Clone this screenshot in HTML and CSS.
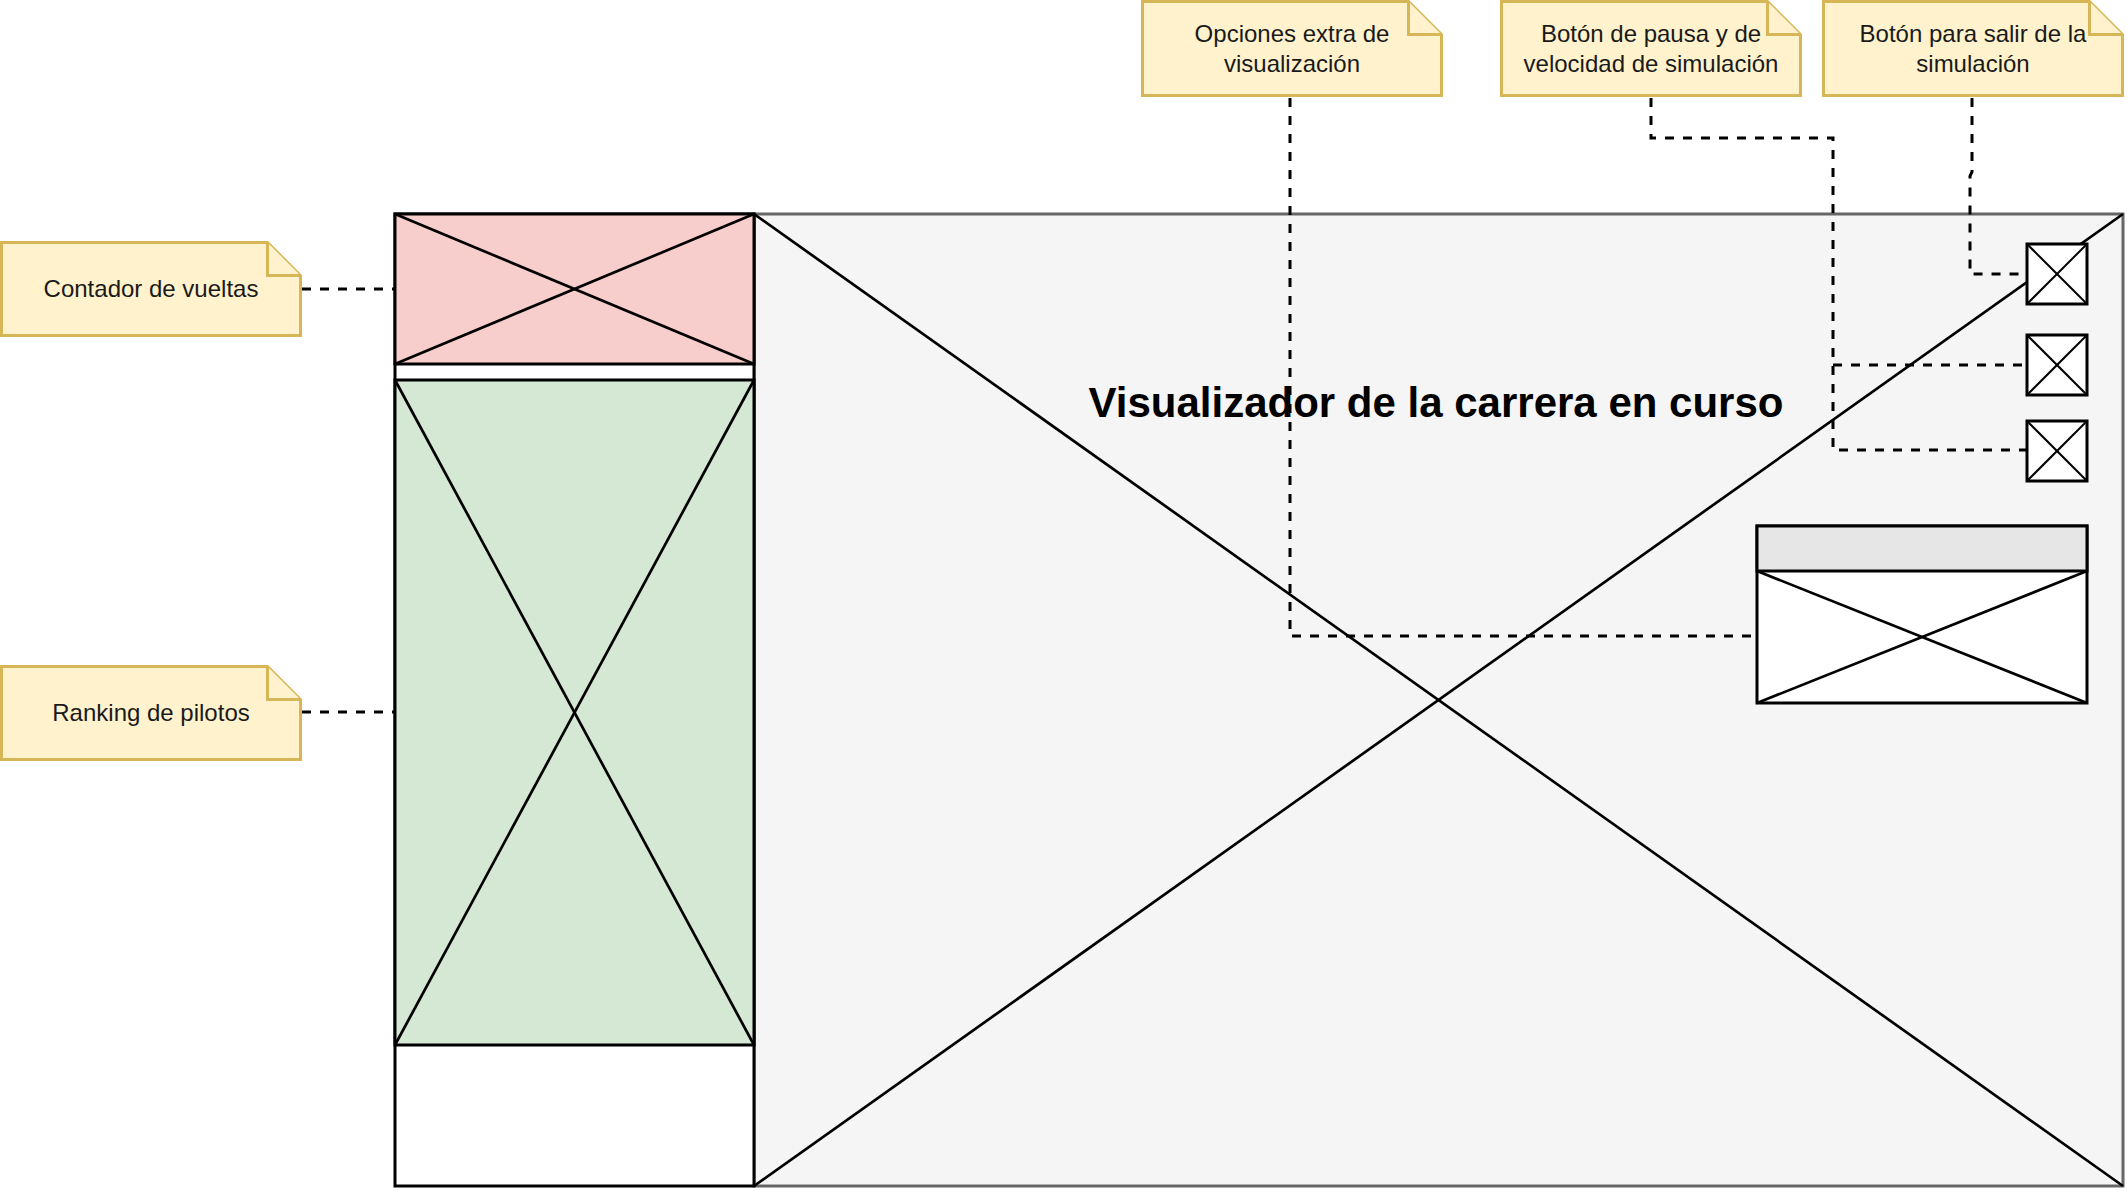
FILE: index.html
```html
<!DOCTYPE html>
<html lang="es">
<head>
    <meta charset="UTF-8">
    <title>Wireframe | Visualizador de carrera</title>
    <link rel="stylesheet" href="styles.css">
</head>
<body>

    <div class="board">

        <!-- Shapes: panel lateral, visualizador, botones, opciones -->
        <svg class="layer" width="2127" height="1191" viewBox="0 0 2127 1191">
            <rect class="viewer" x="754" y="214" width="1369" height="972"/>
            <line class="cross" x1="754" y1="214" x2="2123" y2="1186"/>
            <line class="cross" x1="754" y1="1186" x2="2123" y2="214"/>

            <rect class="box" x="395" y="214" width="359" height="972"/>
            <rect class="box lap" x="395" y="214" width="359" height="150"/>
            <line class="cross" x1="395" y1="214" x2="754" y2="364"/>
            <line class="cross" x1="395" y1="364" x2="754" y2="214"/>
            <rect class="box ranking" x="395" y="380" width="359" height="665"/>
            <line class="cross" x1="395" y1="380" x2="754" y2="1045"/>
            <line class="cross" x1="395" y1="1045" x2="754" y2="380"/>

            <rect class="box" x="2027" y="244" width="60" height="60"/>
            <line class="cross thin" x1="2027" y1="244" x2="2087" y2="304"/>
            <line class="cross thin" x1="2027" y1="304" x2="2087" y2="244"/>
            <rect class="box" x="2027" y="335" width="60" height="60"/>
            <line class="cross thin" x1="2027" y1="335" x2="2087" y2="395"/>
            <line class="cross thin" x1="2027" y1="395" x2="2087" y2="335"/>
            <rect class="box" x="2027" y="421" width="60" height="60"/>
            <line class="cross thin" x1="2027" y1="421" x2="2087" y2="481"/>
            <line class="cross thin" x1="2027" y1="481" x2="2087" y2="421"/>

            <rect class="box" x="1757" y="526" width="330" height="177"/>
            <rect class="box header" x="1757" y="526" width="330" height="45"/>
            <line class="cross" x1="1757" y1="571" x2="2087" y2="703"/>
            <line class="cross" x1="1757" y1="703" x2="2087" y2="571"/>
        </svg>

        <div class="title">Visualizador de la carrera en curso</div>

        <!-- Connectors and notes -->
        <svg class="layer" width="2127" height="1191" viewBox="0 0 2127 1191">
            <path class="link" d="M302 289 H395"/>
            <path class="link" d="M302 712 H395"/>
            <path class="link" d="M1290 98 V636 H1757"/>
            <path class="link" d="M1651 98 V138 H1833 V450 H2027 M1833 365 H2027"/>
            <path class="link" d="M1972 98 V172 L1970 176 V274 H2027"/>

            <g transform="translate(1.5 242.5)">
                <path class="note" d="M0 0 H266 L299 33 V93 H0 Z"/>
                <path class="note" d="M266 0 V33 H299"/>
            </g>
            <g transform="translate(1.5 666.5)">
                <path class="note" d="M0 0 H266 L299 33 V93 H0 Z"/>
                <path class="note" d="M266 0 V33 H299"/>
            </g>
            <g transform="translate(1142.5 1.5)">
                <path class="note" d="M0 0 H266 L299 33 V94 H0 Z"/>
                <path class="note" d="M266 0 V33 H299"/>
            </g>
            <g transform="translate(1501.5 1.5)">
                <path class="note" d="M0 0 H266 L299 33 V94 H0 Z"/>
                <path class="note" d="M266 0 V33 H299"/>
            </g>
            <g transform="translate(1823.5 1.5)">
                <path class="note" d="M0 0 H266 L299 33 V94 H0 Z"/>
                <path class="note" d="M266 0 V33 H299"/>
            </g>
        </svg>

        <div class="note-text side" style="top: 241px;">Contador de vueltas</div>
        <div class="note-text side" style="top: 665px;">Ranking de pilotos</div>
        <div class="note-text top" style="left: 1141px;">Opciones extra de visualización</div>
        <div class="note-text top" style="left: 1500px;">Botón de pausa y de velocidad de simulación</div>
        <div class="note-text top" style="left: 1822px;">Botón para salir de la simulación</div>
    </div>

</body>
</html>
```

FILE: styles.css
```css
/* General Styles */
* {
    margin: 0;
    padding: 0;
    box-sizing: border-box;
}

body {
    font-family: 'Liberation Sans', Arial, sans-serif;
    background-color: #ffffff;
    color: #1a1a1a;
    overflow: hidden;
}

/* Diagram board */
.board {
    position: relative;
    width: 2127px;
    height: 1191px;
}

.layer {
    position: absolute;
    top: 0;
    left: 0;
}

/* Wireframe shapes */
.viewer {
    fill: #f5f5f5;
    stroke: #666666;
    stroke-width: 3;
}

.box {
    fill: #ffffff;
    stroke: #000000;
    stroke-width: 3;
}

.lap {
    fill: #f8cecc;
}

.ranking {
    fill: #d5e8d4;
}

.header {
    fill: #e6e6e6;
}

.cross {
    stroke: #000000;
    stroke-width: 2.7;
}

.cross.thin {
    stroke-width: 2;
}

/* Title */
.title {
    position: absolute;
    left: 1036px;
    top: 378px;
    width: 800px;
    text-align: center;
    font-size: 42px;
    font-weight: bold;
    line-height: 50px;
    color: #000000;
}

/* Connectors */
.link {
    fill: none;
    stroke: #000000;
    stroke-width: 3;
    stroke-dasharray: 9 9;
}

/* Notes */
.note {
    fill: #fff2cc;
    stroke: #d6b656;
    stroke-width: 3;
    stroke-linejoin: miter;
}

.note-text {
    position: absolute;
    display: flex;
    align-items: center;
    justify-content: center;
    text-align: center;
    font-size: 24px;
    line-height: 30px;
    color: #1a1a1a;
    padding: 0 12px;
}

.note-text.side {
    left: 0;
    width: 302px;
    height: 96px;
}

.note-text.top {
    top: 0;
    width: 302px;
    height: 98px;
}
```
